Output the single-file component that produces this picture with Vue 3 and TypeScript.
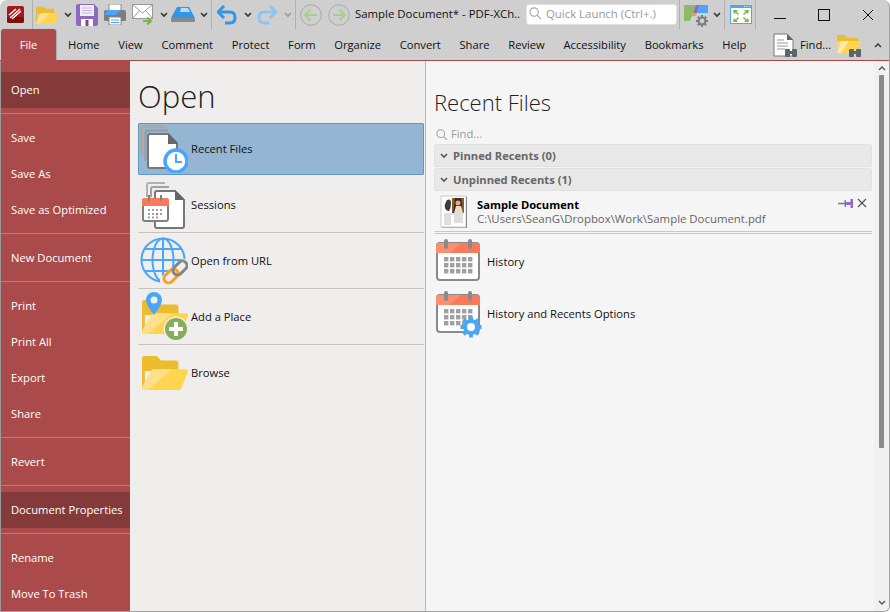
<template>
  <div class="window">
    <svg class="defs" width="0" height="0" aria-hidden="true">
      <defs>
        <symbol id="chev" viewBox="0 0 8 6">
          <path d="M1 1l3 3 3-3" fill="none" stroke="currentColor" stroke-width="1.6" />
        </symbol>
        <symbol id="folder" viewBox="0 0 48 36">
          <path d="M0 3q0-3 3-3h12l5 5h15q3 0 3 3v8H0z" fill="#edbc2e" />
          <path d="M0 33q0 3 3 3h35q2 0 3-2l7-17q1-3-2-3H13q-2 0-3 2z" fill="#ffd54f" />
          <path d="M0 33l10-18q1-1 3-1h18L6 36H3q-3 0-3-3z" fill="#ffe08a" />
          <path d="M0 3v30l3-6V3z" fill="#edbc2e" />
        </symbol>
        <symbol id="calendar" viewBox="0 0 44 42">
          <rect x="1" y="4" width="42" height="37" rx="3" fill="#fff" stroke="#8a8a8a" stroke-width="2" />
          <path d="M0 14V7q0-3 3-3h38q3 0 3 3v7z" fill="#f97a58" />
          <path d="M0 14V7q0-3 3-3h22L14 14z" fill="#fb8f70" />
          <rect x="8" y="0" width="4" height="10" rx="2" fill="#8a8a8a" />
          <rect x="32" y="0" width="4" height="10" rx="2" fill="#8a8a8a" />
          <g fill="#a0a0a0">
            <rect v-for="c in calendarCells" :key="c.k" :x="c.x" :y="c.y" width="4.4" height="4.4" />
          </g>
        </symbol>
        <symbol id="recent" viewBox="0 0 48 48">
          <path d="M26 1.500H3Q1.500 1.500 1.500 3v26" fill="none" stroke="#a8a8a8" stroke-width="3" />
          <path d="M28 5.500H7Q5.500 5.500 5.500 7v29" fill="none" stroke="#9a9a9a" stroke-width="2" />
          <path d="M10 9h18l9 9v25H10q-2 0-2-2V11q0-2 2-2z" fill="#fff" stroke="#777" stroke-width="2" />
          <path d="M28 8l10 11H28z" fill="#666" />
          <circle cx="36" cy="36" r="11" fill="#fff" stroke="#4aa6f8" stroke-width="3.500" />
          <path d="M36 29v8h6" fill="none" stroke="#4aa6f8" stroke-width="2" />
        </symbol>
        <symbol id="sessions" viewBox="0 0 48 48">
          <path d="M25 2H9Q7 2 7 4v12" fill="none" stroke="#b0b0b0" stroke-width="2" />
          <path d="M29 6H13q-2 0-2 2v8" fill="none" stroke="#a0a0a0" stroke-width="2" />
          <path d="M17 10h18l9 9v26q0 2-2 2H17q-2 0-2-2V12q0-2 2-2z" fill="#fff" stroke="#777" stroke-width="2" />
          <path d="M35 9l10 10H35z" fill="#666" />
          <rect x="3" y="18" width="25" height="22" rx="2" fill="#fff" stroke="#808080" stroke-width="2" />
          <path d="M2 25v-5q0-3 3-3h21q3 0 3 3v5z" fill="#f97a58" />
          <rect x="8" y="14" width="2" height="6" fill="#808080" />
          <rect x="20" y="14" width="2" height="6" fill="#808080" />
          <g fill="#a0a0a0">
            <rect x="8" y="28" width="2" height="2" /><rect x="12" y="28" width="2" height="2" /><rect x="16" y="28" width="2" height="2" /><rect x="20" y="28" width="2" height="2" />
            <rect x="8" y="32" width="2" height="2" /><rect x="12" y="32" width="2" height="2" /><rect x="20" y="32" width="2" height="2" />
            <rect x="8" y="35.500" width="2" height="2" /><rect x="12" y="35.500" width="2" height="2" /><rect x="16" y="35.500" width="2" height="2" />
          </g>
          <rect x="16" y="32" width="2" height="2" fill="#f0602f" />
        </symbol>
        <symbol id="globe" viewBox="0 0 48 48">
          <g fill="none" stroke="#4aa6f8" stroke-width="2">
            <circle cx="23" cy="23" r="21.500" />
            <ellipse cx="23" cy="23" rx="10.500" ry="21.500" />
            <path d="M23 1.500v43M1.500 23h43M4.500 12h37M4.500 34h37" />
          </g>
          <path d="M27 44L44 29" fill="none" stroke="#f0eded" stroke-width="14" stroke-linecap="round" />
          <rect x="23" y="34.500" width="16" height="9" rx="4.500" transform="rotate(-45 31 39)" fill="none" stroke="#f7a12d" stroke-width="3" />
          <rect x="32" y="26.500" width="16" height="9" rx="4.500" transform="rotate(-45 40 31)" fill="none" stroke="#858585" stroke-width="3" />
        </symbol>
      </defs>
    </svg>

    <header class="title-bar">
      <svg class="app-logo" viewBox="0 0 17 17">
        <rect width="17" height="17" rx="2" fill="#a31a1a" />
        <rect y="11" width="17" height="6" rx="2" fill="#7a1010" />
        <path d="M3 12L13 3M5 13l9-8M2 9l7-6" stroke="#fff" stroke-width="1.300" fill="none" />
      </svg>
      <span class="sep first"></span>
      <svg class="ic folder-btn" viewBox="0 0 48 36"><use href="#folder" /></svg>
      <svg class="chev" viewBox="0 0 8 6"><use href="#chev" /></svg>
      <svg class="ic save" viewBox="0 0 22 22">
        <path d="M2 0h16l4 4v16q0 2-2 2H2q-2 0-2-2V2q0-2 2-2z" fill="#8e68c0" />
        <rect x="4" y="1" width="14" height="11" fill="#f1edf7" />
        <path d="M6 4h10M6 6.500h10M6 9h10" stroke="#c3b7d8" />
        <rect x="5" y="15" width="12" height="7" fill="#fff" />
        <rect x="9.500" y="16" width="3" height="6" fill="#6b4a99" />
      </svg>
      <svg class="ic print" viewBox="0 0 22 21">
        <rect x="5" y="0" width="12" height="7" fill="#fff" stroke="#8a8a8a" />
        <path d="M2 6h18q2 0 2 2v8q0 1-1 1H1q-1 0-1-1V8q0-2 2-2z" fill="#7d7d7d" />
        <path d="M4 6h13l-5 5H0z" fill="#4aa6f8" />
        <rect x="5" y="13" width="12" height="8" fill="#fff" stroke="#8a8a8a" />
        <path d="M7 16h8M7 18.500h8" stroke="#4aa6f8" />
      </svg>
      <svg class="ic mail" viewBox="0 0 22 21">
        <rect x=".5" y=".5" width="20" height="14" fill="#fff" stroke="#9a9a9a" />
        <path d="M1 1l9.500 8L20 1M1 14l6.500-7.500M20 14l-6.500-7.500" fill="none" stroke="#9a9a9a" />
        <path d="M11 17h7M15 13.500l4 3.500-4 3.500" fill="none" stroke="#7cb342" stroke-width="2" />
      </svg>
      <svg class="chev" viewBox="0 0 8 6"><use href="#chev" /></svg>
      <svg class="ic scan" viewBox="0 0 24 15">
        <path d="M6 0h12l6 11H0z" fill="#2f97ea" />
        <path d="M10 1h7l2 4H9z" fill="#b5dcfb" />
        <rect y="11" width="24" height="4" rx="1" fill="#8a8a8a" />
      </svg>
      <svg class="chev" viewBox="0 0 8 6"><use href="#chev" /></svg>
      <span class="sep"></span>
      <svg class="ic undo" viewBox="0 0 20 20">
        <path d="M2 7h11q5 0 5 5.500T13 18H8" fill="none" stroke="#2f97ea" stroke-width="3" />
        <path d="M7 1L1 7l6 6" fill="none" stroke="#2f97ea" stroke-width="3" />
      </svg>
      <svg class="chev" viewBox="0 0 8 6"><use href="#chev" /></svg>
      <svg class="ic redo" viewBox="0 0 20 20">
        <path d="M18 7H7q-5 0-5 5.500T7 18h5" fill="none" stroke="#8fc4ef" stroke-width="3" />
        <path d="M13 1l6 6-6 6" fill="none" stroke="#8fc4ef" stroke-width="3" />
      </svg>
      <svg class="chev muted" viewBox="0 0 8 6"><use href="#chev" /></svg>
      <span class="sep"></span>
      <svg class="ic nav-btn" viewBox="0 0 22 22">
        <circle cx="11" cy="11" r="10.300" fill="none" stroke="#a9a9a9" />
        <path d="M5 11h12M10.500 5.500L5 11l5.500 5.500" fill="none" stroke="#a6cf8c" stroke-width="2" />
      </svg>
      <svg class="ic nav-btn" viewBox="0 0 22 22">
        <circle cx="11" cy="11" r="10.300" fill="none" stroke="#a9a9a9" />
        <path d="M5 11h12M11.500 5.500L17 11l-5.500 5.500" fill="none" stroke="#a6cf8c" stroke-width="2" />
      </svg>
      <span class="doc-title">Sample Document* - PDF-XCh..</span>
      <div class="quick-launch">
        <svg class="magnifier" viewBox="0 0 14 14">
          <circle cx="5.500" cy="5.500" r="4.500" fill="none" stroke="#a5a5a5" stroke-width="1.200" />
          <path d="M9 9l4 4" stroke="#a5a5a5" stroke-width="1.200" />
        </svg>
        <span>Quick Launch (Ctrl+.)</span>
      </div>
      <span class="sep after-ql"></span>
      <svg class="ic ui-opts" viewBox="0 0 24 24">
        <path d="M0 2h12L6 18H0z" fill="#8cb96a" />
        <path d="M12 2h4l-3 8H9z" fill="#8d6ad0" />
        <path d="M16 2h8v8h-11z" fill="#4aa6f8" />
        <path d="M9 10h4l-1 3H8z" fill="#f7a12d" />
        <path d="M18 12v12M12 18h12M13.800 13.800l8.400 8.400M22.200 13.800l-8.400 8.400" stroke="#7d7d7d" stroke-width="2" />
        <circle cx="18" cy="18" r="3.500" fill="#cfcfcf" stroke="#7d7d7d" stroke-width="2.200" />
      </svg>
      <svg class="chev" viewBox="0 0 8 6"><use href="#chev" /></svg>
      <span class="sep after-opts"></span>
      <svg class="ic fullscreen" viewBox="0 0 22 19">
        <rect x=".5" y=".5" width="21" height="18" fill="#fff" stroke="#4aa6f8" />
        <rect y="0" width="22" height="3" fill="#4aa6f8" />
        <path d="M14 1.500h1M16.500 1.500h1M19 1.500h1" stroke="#fff" />
        <path d="M3 5h5L6.500 6.500 9 9 8 10 5.500 7.500 4 9zM19 5h-5l1.500 1.500L13 9l1 1 2.500-2.500L18 9zM3 17h5l-1.500-1.500L9 13l-1-1-2.500 2.500L4 13zM19 17h-5l1.500-1.500L13 13l1-1 2.500 2.500L18 13z" fill="#7cb342" />
      </svg>
      <span class="sep after-full"></span>
      <div class="win-buttons">
        <svg viewBox="0 0 12 12"><path d="M0 9.500h12" stroke="#111" /></svg>
        <svg viewBox="0 0 12 12"><rect x=".5" y=".5" width="11" height="11" fill="none" stroke="#111" /></svg>
        <svg viewBox="0 0 12 12"><path d="M1 1l10 10M11 1L1 11" stroke="#111" /></svg>
      </div>
    </header>

    <nav class="ribbon">
      <div class="file-tab">File</div>
      <div class="tabs">
        <span v-for="tab in tabs" :key="tab">{{ tab }}</span>
      </div>
      <svg class="find-doc" viewBox="0 0 24 24">
        <path d="M1 1h13l6 6v16H1z" fill="#fff" stroke="#777" />
        <path d="M14 1l6 6h-6z" fill="#666" />
        <path d="M4 7h7M4 10h11M4 13h11M4 16h8" stroke="#999" />
        <rect x="12" y="16" width="5" height="8" rx="1" fill="#5a6570" />
        <rect x="19" y="16" width="5" height="8" rx="1" fill="#5a6570" />
        <rect x="16" y="18" width="4" height="3" fill="#5a6570" />
      </svg>
      <span class="find-label">Find...</span>
      <svg class="find-folder" viewBox="0 0 24 24">
        <path d="M0 3q0-1 1-1h7l2 3h11v6H0z" fill="#edbc2e" />
        <path d="M0 20V8h24l-4 12z" fill="#ffd54f" />
        <path d="M0 20l4-12h8l-8 12z" fill="#ffe9ad" />
        <rect x="12" y="16" width="5" height="8" rx="1" fill="#5a6570" />
        <rect x="19" y="16" width="5" height="8" rx="1" fill="#5a6570" />
        <rect x="16" y="18" width="4" height="3" fill="#5a6570" />
      </svg>
      <svg class="collapse" viewBox="0 0 8 6"><path d="M1 5l3-3 3 3" fill="none" stroke="#333" stroke-width="1.400" /></svg>
    </nav>

    <main class="backstage">
      <aside class="side-menu">
        <template v-for="(group, i) in menuGroups" :key="i">
          <hr v-if="i > 0" />
          <div
            v-for="item in group"
            :key="item"
            class="menu-item"
            :class="{ active: activeItems.includes(item) }"
          >
            {{ item }}
          </div>
        </template>
      </aside>

      <section class="open-panel">
        <h1>Open</h1>
        <div v-for="place in places" :key="place.label" class="place" :class="{ selected: place.selected }">
          <svg v-if="place.icon" class="place-icon"><use :href="'#' + place.icon" /></svg>
          <div v-else class="folder-wrap">
            <svg class="folder-ic" viewBox="0 0 48 36"><use href="#folder" /></svg>
            <template v-if="place.add">
              <svg class="pin-drop" viewBox="0 0 16 23">
                <path d="M8 0a8 8 0 0 1 8 8q0 5-8 15Q0 13 0 8a8 8 0 0 1 8-8z" fill="#4aa6f8" />
                <circle cx="8" cy="8" r="3.500" fill="#f0eded" />
              </svg>
              <svg class="plus-badge" viewBox="0 0 26 26">
                <circle cx="13" cy="13" r="12.500" fill="#f0eded" />
                <circle cx="13" cy="13" r="11" fill="#86ad5a" />
                <path d="M13 6v14M6 13h14" stroke="#fff" stroke-width="4" />
              </svg>
            </template>
          </div>
          <span>{{ place.label }}</span>
        </div>
      </section>

      <section class="recent-panel">
        <h2>Recent Files</h2>
        <div class="find-row">
          <svg viewBox="0 0 14 14">
            <circle cx="5.500" cy="5.500" r="4.500" fill="none" stroke="#a5a5a5" stroke-width="1.200" />
            <path d="M9 9l4 4" stroke="#a5a5a5" stroke-width="1.200" />
          </svg>
          <span>Find...</span>
        </div>
        <div v-for="group in recentGroups" :key="group" class="group-head">
          <svg viewBox="0 0 8 6"><use href="#chev" /></svg>
          <span>{{ group }}</span>
        </div>
        <div class="file-row">
          <svg class="thumb" viewBox="0 0 27 33">
            <rect x="1" y="1" width="25" height="31" fill="#fff" stroke="#ccc" />
            <path d="M26.500 2v31H2" fill="none" stroke="#8a8a8a" />
            <path d="M7 5q4-2 4 3t-2 8q-3 0-4-3t2-8z" fill="#3a3a3a" />
            <rect x="12" y="3" width="12" height="15" fill="#8a5a30" />
            <path d="M15 3h6l1 6-1 9h-8l1-8z" fill="#3d2a1f" />
            <circle cx="18" cy="8" r="2.500" fill="#dcae8a" />
            <path d="M14 18l2-7h5l2 7z" fill="#e8dcc8" />
            <path d="M4 19h19M4 21h7M14 21h9M4 23h7M14 23h9M4 25h7M14 25h9M4 27h7M14 27h9M4 29h7" stroke="#bdbdbd" />
          </svg>
          <div class="file-text">
            <strong>Sample Document</strong>
            <span>C:\Users\SeanG\Dropbox\Work\Sample Document.pdf</span>
          </div>
          <div class="file-actions">
            <svg class="pin" viewBox="0 0 15 9">
              <path d="M0 4.500h7" stroke="#777" stroke-width="1.500" />
              <path d="M6.500 1h1.500v2h4.500V0H15v9h-2.500V6H8v2H6.500z" fill="#8d6ad0" />
            </svg>
            <svg class="remove" viewBox="0 0 10 10"><path d="M1 1l8 8M9 1L1 9" stroke="#555" stroke-width="1.200" /></svg>
          </div>
        </div>
        <div class="action">
          <svg class="cal"><use href="#calendar" /></svg>
          <span>History</span>
        </div>
        <div class="action">
          <div class="cal-wrap">
            <svg class="cal"><use href="#calendar" /></svg>
            <svg class="gear" viewBox="0 0 24 24">
              <path d="M12 1.500v21M1.500 12h21M4.600 4.600l14.800 14.800M19.400 4.600L4.600 19.400" stroke="#4aa6f8" stroke-width="3.800" />
              <circle cx="12" cy="12" r="6" fill="#fff" stroke="#4aa6f8" stroke-width="4" />
            </svg>
          </div>
          <span>History and Recents Options</span>
        </div>
      </section>

      <div class="scrollbar">
        <svg viewBox="0 0 8 6"><path d="M1 5l3-3 3 3" fill="none" stroke="#555" stroke-width="1.400" /></svg>
        <div class="thumb-bar"></div>
        <svg class="down" viewBox="0 0 8 6"><path d="M1 1l3 3 3-3" fill="none" stroke="#555" stroke-width="1.400" /></svg>
      </div>
    </main>
  </div>
</template>

<script setup lang="ts">
interface Place {
  label: string
  icon?: string
  selected?: boolean
  add?: boolean
}

const tabs = [
  'Home',
  'View',
  'Comment',
  'Protect',
  'Form',
  'Organize',
  'Convert',
  'Share',
  'Review',
  'Accessibility',
  'Bookmarks',
  'Help',
]

const menuGroups = [
  ['Open'],
  ['Save', 'Save As', 'Save as Optimized'],
  ['New Document'],
  ['Print', 'Print All', 'Export', 'Share'],
  ['Revert'],
  ['Document Properties'],
  ['Rename', 'Move To Trash'],
]
const activeItems = ['Open', 'Document Properties']

const places: Place[] = [
  { label: 'Recent Files', icon: 'recent', selected: true },
  { label: 'Sessions', icon: 'sessions' },
  { label: 'Open from URL', icon: 'globe' },
  { label: 'Add a Place', add: true },
  { label: 'Browse' },
]

const recentGroups = ['Pinned Recents (0)', 'Unpinned Recents (1)']

const calendarCells: { k: string; x: number; y: number }[] = []
for (let r = 0; r < 3; r++) {
  for (let c = 0; c < 5; c++) {
    calendarCells.push({ k: `${r}-${c}`, x: 8 + c * 6, y: 18 + r * 6 })
  }
}
</script>

<style>
html,
body {
  margin: 0;
  overflow: hidden;
}
</style>

<style scoped>
.window {
  width: 890px;
  height: 612px;
  box-sizing: border-box;
  display: flex;
  flex-direction: column;
  background: #cfcfcf;
  border-right: 1px solid #a0a0a0;
  border-bottom: 1px solid #a0a0a0;
  border-radius: 7px 7px 6px 0;
  font-family: 'Open Sans', 'Noto Sans', sans-serif;
  font-size: 11.2px;
  color: #111;
  overflow: hidden;
}

.defs {
  position: absolute;
}

.title-bar {
  height: 29px;
  flex: none;
  display: flex;
  align-items: center;
  padding-left: 7px;
}

.app-logo {
  width: 17px;
  height: 17px;
  margin-right: 8px;
}

.sep {
  width: 1px;
  height: 29px;
  background: #b0b0b0;
  margin: 0 3px;
}

.sep.first {
  margin: 0 3px 0 0;
}

.ic {
  display: block;
  flex: none;
}

.chev {
  width: 8px;
  height: 6px;
  flex: none;
  color: #333;
}

.chev.muted {
  color: #999;
}

.folder-btn {
  width: 23px;
  height: 18px;
  margin-right: 5px;
}

.folder-btn + .chev {
  margin-right: 4px;
}

.save {
  width: 22px;
  height: 22px;
  margin-right: 6px;
}

.print {
  width: 22px;
  height: 21px;
  margin-right: 6px;
}

.mail {
  width: 22px;
  height: 21px;
  margin-right: 6px;
}

.mail + .chev {
  margin-right: 3px;
}

.scan {
  width: 24px;
  height: 15px;
  margin-right: 5px;
}

.undo {
  width: 20px;
  height: 20px;
  margin: 0 7px 0 2px;
}

.undo + .chev {
  margin-right: 5px;
}

.redo {
  width: 20px;
  height: 20px;
  margin-right: 7px;
}

.nav-btn {
  width: 22px;
  height: 22px;
  margin-left: 1px;
  margin-right: 5px;
}

.doc-title {
  width: 171px;
  padding-bottom: 2px;
  font-size: 11.4px;
  white-space: nowrap;
}

.quick-launch {
  width: 151px;
  height: 21px;
  box-sizing: border-box;
  display: flex;
  align-items: center;
  gap: 4px;
  padding: 0 0 2px 2px;
  background: #fff;
  border: 1px solid #e0e0e0;
  border-radius: 3px;
  color: #999;
  font-size: 11.4px;
  white-space: nowrap;
}

.magnifier {
  width: 13px;
  height: 13px;
}

.after-ql {
  margin: 0 4px 0 2px;
}

.ui-opts {
  width: 24px;
  height: 24px;
  margin-right: 5px;
}

.after-opts {
  margin: 0 5px 0 3px;
}

.fullscreen {
  width: 22px;
  height: 19px;
}

.after-full {
  margin: 0 0 0 3px;
}

.win-buttons {
  display: flex;
  gap: 32px;
  margin-left: 18px;
}

.win-buttons svg {
  width: 12px;
  height: 12px;
  display: block;
}

.ribbon {
  height: 32px;
  flex: none;
  display: flex;
  align-items: center;
  padding-left: 1px;
  border-bottom: 1px solid #a94747;
  box-sizing: border-box;
}

.file-tab {
  width: 55px;
  height: 31px;
  flex: none;
  background: #ab4a4a;
  color: #fff;
  border-radius: 3px 3px 0 0;
  display: flex;
  align-items: center;
  justify-content: center;
  box-shadow: 1px 0 1px #aaa;
}

.tabs {
  display: flex;
  gap: 18.7px;
  margin-left: 12px;
  width: 705px;
  flex: none;
  white-space: nowrap;
}

.find-doc,
.find-folder {
  width: 24px;
  height: 24px;
  flex: none;
}

.find-label {
  margin: 0 6px 0 3px;
}

.collapse {
  width: 8px;
  height: 6px;
  margin-left: 13px;
}

.backstage {
  flex: 1;
  display: flex;
  min-height: 0;
}

.side-menu {
  width: 130px;
  flex: none;
  box-sizing: border-box;
  padding-top: 11px;
  background: #ab4a4a;
  border-left: 1px solid #9a9a9a;
  color: #fff;
  overflow: hidden;
}

.side-menu hr {
  height: 1px;
  margin: 5px 0 6px;
  border: 0;
  background: #c27a7a;
}

.menu-item {
  height: 36px;
  line-height: 35px;
  padding-left: 10px;
  white-space: nowrap;
}

.menu-item.active {
  background: #853a3a;
}

.open-panel {
  width: 295px;
  flex: none;
  box-sizing: border-box;
  padding: 0 1px 0 8px;
  background: #f0eded;
}

.open-panel h1 {
  height: 62px;
  margin: 0;
  font-size: 31px;
  font-weight: 300;
  line-height: 70px;
  color: #222;
}

.place {
  height: 56px;
  box-sizing: border-box;
  display: flex;
  align-items: center;
  border-bottom: 1px solid #c4c2c2;
  padding: 1px 0 0 2px;
}

.place:last-child {
  border-bottom: 0;
  padding-top: 0;
}

.place.selected {
  height: 52px;
  margin-bottom: 2px;
  padding-top: 0;
  border-bottom: 0;
  border-radius: 2px;
  background: #95b6d3;
  box-shadow: inset 0 0 0 1px #5f97cb;
}

.place-icon {
  width: 48px;
  height: 48px;
  flex: none;
}

.place > span {
  margin-left: 3px;
  padding-bottom: 2px;
}

.folder-wrap {
  width: 48px;
  height: 48px;
  flex: none;
  position: relative;
}

.folder-ic {
  position: absolute;
  left: 2px;
  bottom: 6px;
  width: 46px;
  height: 36px;
}

.pin-drop {
  position: absolute;
  left: 6px;
  top: -1px;
  width: 16px;
  height: 23px;
}

.plus-badge {
  position: absolute;
  right: -1px;
  bottom: -1px;
  width: 26px;
  height: 26px;
}

.recent-panel {
  flex: 1;
  min-width: 0;
  box-sizing: border-box;
  padding: 0 2px 0 8px;
  background: #f5f5f5;
  border-left: 1px solid #b5b5b5;
}

.recent-panel h2 {
  height: 64px;
  margin: 0;
  font-size: 22px;
  font-weight: 300;
  line-height: 82px;
  color: #222;
}

.find-row {
  height: 19px;
  display: flex;
  align-items: center;
  gap: 3px;
  padding-left: 2px;
  color: #999;
}

.find-row span {
  margin-top: -2px;
}

.find-row svg {
  width: 12px;
  height: 12px;
}

.group-head {
  height: 23px;
  box-sizing: border-box;
  display: flex;
  align-items: center;
  gap: 5px;
  padding-left: 5px;
  margin-bottom: 1px;
  background: #e8e8e8;
  border: 1px solid #e0e0e0;
  border-radius: 2px;
  color: #666;
  font-weight: 700;
}

.group-head span {
  margin-top: -1px;
}

.group-head svg {
  width: 8px;
  height: 6px;
  color: #555;
}

.file-row {
  height: 42px;
  box-sizing: border-box;
  display: flex;
  align-items: center;
  border-bottom: 3px double #c8c8c8;
  padding-left: 6px;
  position: relative;
}

.thumb {
  width: 27px;
  height: 33px;
  flex: none;
}

.file-text {
  margin-left: 10px;
  display: flex;
  flex-direction: column;
  line-height: 14px;
}

.file-text strong {
  color: #000;
}

.file-text span {
  color: #666;
  font-size: 11.4px;
}

.file-actions {
  position: absolute;
  top: 6px;
  right: 5px;
  display: flex;
  align-items: center;
  gap: 4px;
}

.pin {
  width: 15px;
  height: 9px;
}

.remove {
  width: 10px;
  height: 10px;
}

.action {
  height: 52px;
  display: flex;
  align-items: center;
  gap: 7px;
  padding-left: 2px;
}

.action > span {
  padding-top: 2px;
}

.cal {
  width: 44px;
  height: 42px;
  flex: none;
  display: block;
}

.cal-wrap {
  width: 44px;
  height: 42px;
  position: relative;
}

.gear {
  position: absolute;
  right: -3px;
  bottom: -6px;
  width: 24px;
  height: 24px;
}

.scrollbar {
  width: 15px;
  flex: none;
  display: flex;
  flex-direction: column;
  align-items: center;
  padding-top: 4px;
  box-sizing: border-box;
  background: #f0f0f0;
}

.scrollbar > svg {
  width: 8px;
  height: 6px;
  flex: none;
}

.thumb-bar {
  width: 5px;
  height: 373px;
  margin-top: 4px;
  border-radius: 1px;
  background: #8a8a8a;
}

.scrollbar .down {
  margin-top: auto;
  margin-bottom: 5px;
}
</style>
